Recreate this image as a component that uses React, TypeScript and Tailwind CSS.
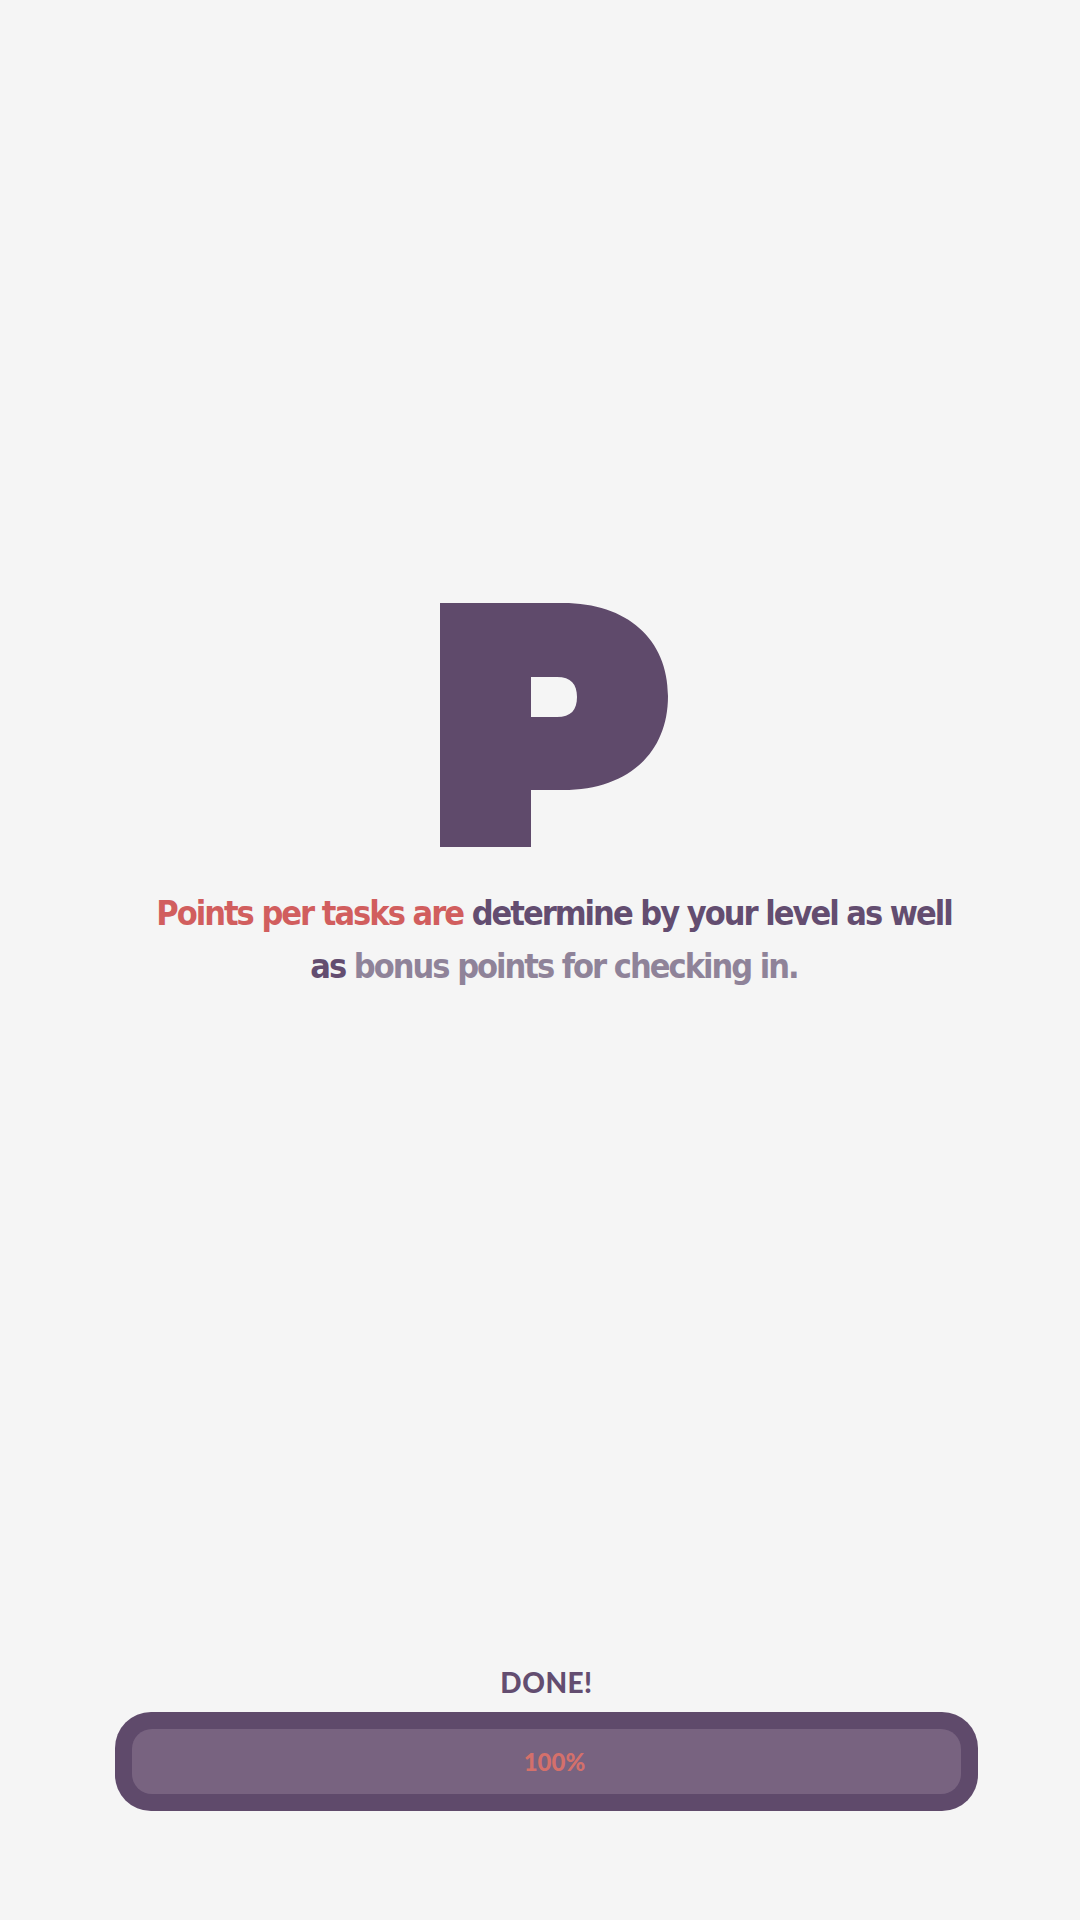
import React from 'react';

const condensed = {
  fontFamily: "'Liberation Sans Narrow', 'DejaVu Sans Condensed', Roboto, sans-serif",
};
const rounded = { fontFamily: "Lato, 'Noto Sans', sans-serif" };

function PointsLogo() {
  return (
    <svg width="228" height="244" viewBox="0 0 228 244" className="block">
      <path
        fill="#5f4a6b"
        fillRule="evenodd"
        d="M0 0H123C187 0 228 36 228 93C228 151 187 187 123 187H91V244H0Z M91 74H117C131 74 137 81 137 94C137 107 131 114 117 114H91Z"
      />
    </svg>
  );
}

export default function App() {
  return (
    <div className="flex h-[1920px] w-[1080px] flex-col bg-[#f5f5f5]">
      <div className="flex flex-col items-center pl-[28px] pt-[603px]">
        <PointsLogo />
        <p
          className="mt-[40px] text-center text-[34px] font-bold leading-[53px] tracking-[-2px]"
          style={condensed}
        >
          <span className="text-[#d15e5e]">Points per tasks are </span>
          <span className="text-[#634d70]">determine by your level as well</span>
          <br />
          <span className="text-[#634d70]">as </span>
          <span className="text-[#8f8399]">bonus points for checking in.</span>
        </p>
      </div>

      <div className="mt-auto mb-[109px] flex flex-col items-center pl-[13px]">
        <div
          className="text-[28px] font-black leading-none tracking-[0.5px] text-[#634d70]"
          style={rounded}
        >
          DONE!
        </div>
        <div className="mt-[16px] w-[863px] rounded-[36px] bg-[#5f4a6b] p-[17px]">
          <div className="flex h-[65px] items-center justify-center rounded-[20px] bg-[#786380] pl-[16px]">
            <span
              className="text-[24px] font-black leading-none text-[#d4706b]"
              style={rounded}
            >
              100%
            </span>
          </div>
        </div>
      </div>
    </div>
  );
}
